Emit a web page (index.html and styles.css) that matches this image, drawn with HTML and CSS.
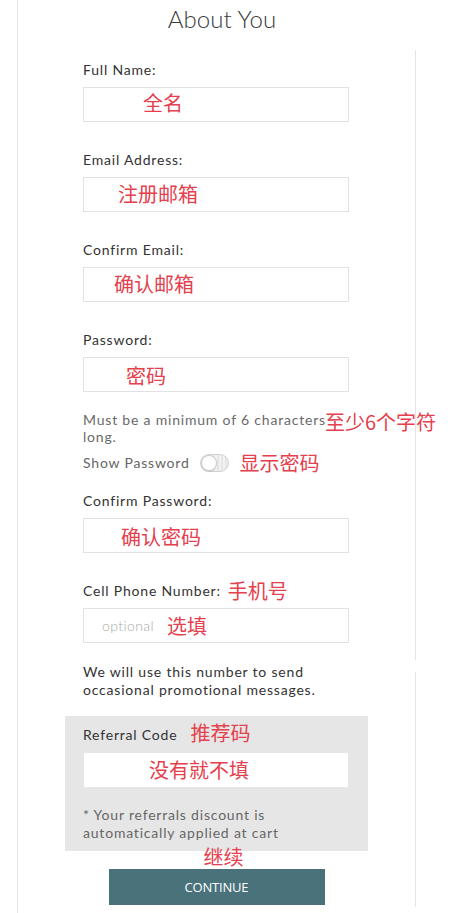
FILE: index.html
```html
<!DOCTYPE html>
<html lang="en">
<head>
<meta charset="utf-8">
<title>About You</title>
<link rel="stylesheet" href="styles.css">
</head>
<body>
<div class="page">
  <h1 class="title">About You</h1>
  <div class="panel">
    <span class="rail-gap"></span>

    <div class="field">
      <div class="label">Full Name:</div>
      <div class="box"><span class="note in-60">全名</span></div>
    </div>

    <div class="field">
      <div class="label">Email Address:</div>
      <div class="box"><span class="note in-35">注册邮箱</span></div>
    </div>

    <div class="field">
      <div class="label">Confirm Email:</div>
      <div class="box"><span class="note in-31">确认邮箱</span></div>
    </div>

    <div class="field">
      <div class="label">Password:</div>
      <div class="box"><span class="note in-43">密码</span></div>
    </div>

    <p class="hint">Must be a minimum of 6 characters<br>long.<span class="note hint-note">至少6个字符</span></p>

    <div class="show-row">
      <span class="show-label">Show Password</span>
      <span class="toggle"><span class="knob"></span></span>
      <span class="note show-note">显示密码</span>
    </div>

    <div class="field field-after-toggle">
      <div class="label">Confirm Password:</div>
      <div class="box"><span class="note in-38">确认密码</span></div>
    </div>

    <div class="field">
      <div class="label label-row"><span>Cell Phone Number:</span><span class="note label-note">手机号</span></div>
      <div class="box"><span class="placeholder">optional</span><span class="note opt-note">选填</span></div>
    </div>

    <p class="promo">We will use this number to send<br>occasional promotional messages.</p>

    <div class="referral">
      <div class="label label-row"><span>Referral Code</span><span class="note ref-note">推荐码</span></div>
      <div class="box box-white"><span class="note in-66">没有就不填</span></div>
      <p class="ref-hint">* Your referrals discount is<br>automatically applied at cart</p>
    </div>

    <div class="actions">
      <div class="note continue-note">继续</div>
      <button class="continue" type="button">CONTINUE</button>
    </div>
  </div>
</div>
</body>
</html>
```

FILE: styles.css
```css
* {
  box-sizing: border-box;
}

html, body {
  margin: 0;
  padding: 0;
  background: #ffffff;
}

body {
  font-family: "Lato", "Open Sans", sans-serif;
  color: #333333;
}

.page {
  margin-left: 17px;
  border-left: 1px solid #e4e4e4;
  min-height: 913px;
  width: 457px;
}

.title {
  margin: 0;
  height: 50px;
  width: 397px;
  padding: 4px 0 0 11px;
  font-size: 24px;
  line-height: 30px;
  font-weight: 300;
  text-align: center;
  color: #3a3a3a;
  letter-spacing: 0.1px;
}

.panel {
  position: relative;
  width: 398px;
  border-right: 1px solid #e4e4e4;
  padding: 11px 0 2px 65px;
}

.rail-gap {
  position: absolute;
  right: -2px;
  top: 610px;
  width: 3px;
  height: 12px;
  background: #ffffff;
}

.note {
  font-family: "Noto Sans CJK SC", "Microsoft YaHei", sans-serif;
  color: #e5404d;
  font-size: 20px;
  line-height: 20px;
  letter-spacing: 0;
}

.field + .field {
  margin-top: 29px;
}

.label {
  font-size: 14px;
  line-height: 18px;
  margin-bottom: 8px;
  color: #333333;
  letter-spacing: 0.8px;
  white-space: nowrap;
}

.label-row {
  display: flex;
  align-items: center;
  height: 18px;
}

.box {
  width: 266px;
  height: 35px;
  border: 1px solid #e2e2e2;
  display: flex;
  align-items: center;
  background: #ffffff;
}

.in-60 { margin-left: 59px; margin-top: -3px; }
.in-35 { margin-left: 34px; margin-top: -1px; }
.in-31 { margin-left: 30px; margin-top: -2px; }
.in-43 { margin-left: 42px; margin-top: 2px; }
.in-38 { margin-left: 37px; margin-top: 2px; }
.in-66 { margin-left: 65px; }

.hint {
  position: relative;
  margin: 19px 0 0;
  width: 300px;
  font-size: 14px;
  line-height: 17px;
  color: #6a6a6a;
  letter-spacing: 0.8px;
  white-space: nowrap;
}

.hint-note {
  position: absolute;
  left: 242px;
  top: 1px;
  white-space: nowrap;
}

.show-row {
  margin-top: 9px;
  height: 18px;
  display: flex;
  align-items: center;
}

.show-label {
  font-size: 14px;
  line-height: 18px;
  color: #666666;
  letter-spacing: 0.8px;
}

.toggle {
  margin-left: 10px;
  width: 29px;
  height: 18px;
  border: 1px solid #d2d2d2;
  border-radius: 9px;
  background: repeating-linear-gradient(90deg, #e6e6e6 0 2px, #f2f2f2 2px 4px);
  display: flex;
  align-items: center;
}

.knob {
  width: 16px;
  height: 16px;
  border-radius: 50%;
  background: #ffffff;
  border: 1px solid #cccccc;
  box-shadow: 0 1px 1px rgba(0, 0, 0, 0.08);
}

.show-note {
  margin-left: 11px;
}

.field-after-toggle {
  margin-top: 20px;
}

.label-note {
  margin-left: 7px;
}

.placeholder {
  margin-left: 18px;
  font-size: 14px;
  color: #a8a8a8;
  font-weight: 300;
  letter-spacing: 0.4px;
}

.opt-note {
  margin-left: 13px;
}

.promo {
  margin: 20px 0 0;
  font-size: 14px;
  line-height: 18px;
  color: #333333;
  letter-spacing: 0.8px;
  white-space: nowrap;
}

.referral {
  margin: 17px 0 0 -18px;
  width: 303px;
  background: #e6e6e6;
  padding: 10px 20px 9px 18px;
}

.referral .label {
  margin-bottom: 9px;
}

.ref-note {
  margin-left: 13px;
  margin-top: -4px;
}

.box-white {
  width: 264px;
  height: 34px;
  border: none;
  margin-left: 1px;
}

.ref-hint {
  margin: 19px 0 0;
  font-size: 14px;
  line-height: 18px;
  color: #666666;
  letter-spacing: 0.8px;
  white-space: nowrap;
}

.actions {
  margin-left: -65px;
  width: 397px;
  display: flex;
  flex-direction: column;
  align-items: center;
}

.continue-note {
  margin-top: -3px;
  line-height: 18px;
  padding-left: 14px;
}

.continue {
  margin-top: 3px;
  width: 216px;
  height: 36px;
  border: none;
  background: #49727a;
  color: #ffffff;
  font-family: "Open Sans", "Lato", sans-serif;
  font-size: 13px;
  letter-spacing: -0.2px;
  padding: 0;
  cursor: pointer;
}
```
